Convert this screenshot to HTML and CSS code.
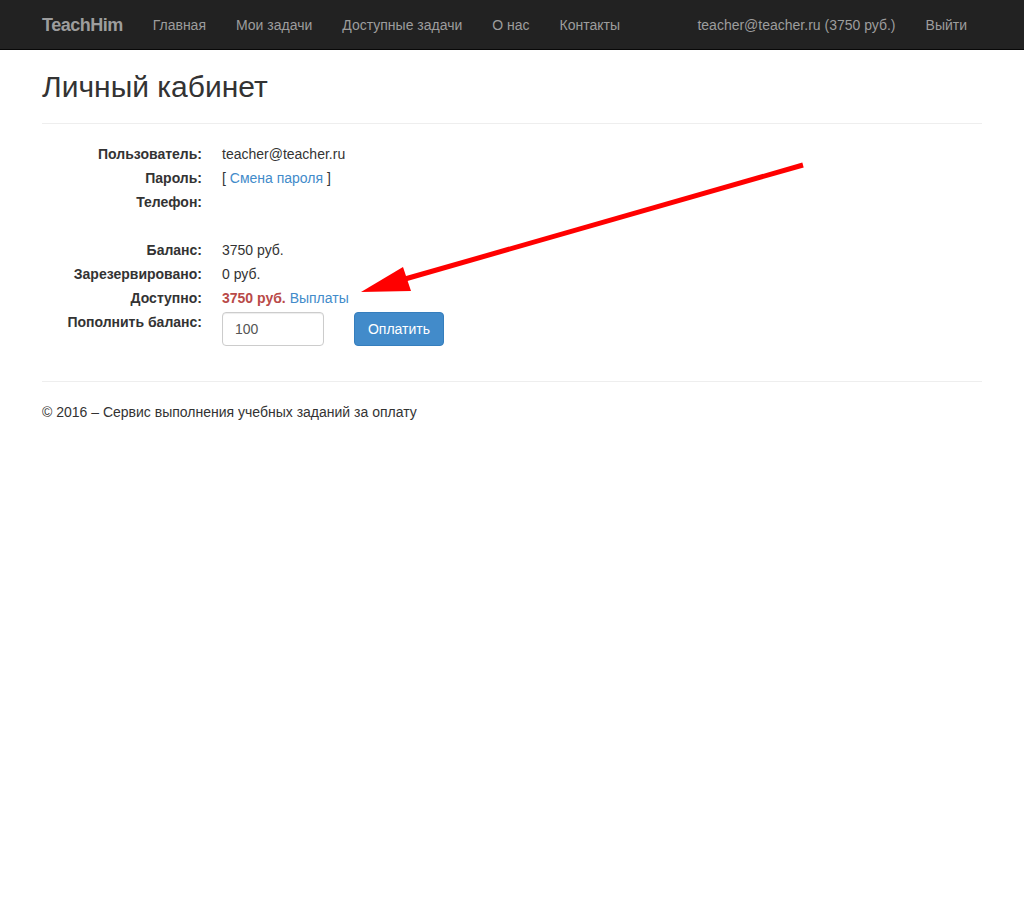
FILE: index.html
```html
<!DOCTYPE html>
<html lang="ru">
<head>
<meta charset="utf-8">
<title>Личный кабинет - TeachHim</title>
<link rel="stylesheet" href="styles.css">
</head>
<body>
<nav class="navbar">
  <div class="container nav-inner">
    <a class="brand" href="#">TeachHim</a>
    <ul class="nav">
      <li><a href="#">Главная</a></li>
      <li><a href="#">Мои задачи</a></li>
      <li><a href="#">Доступные задачи</a></li>
      <li><a href="#">О нас</a></li>
      <li><a href="#">Контакты</a></li>
    </ul>
    <ul class="nav nav-right">
      <li><a href="#">teacher@teacher.ru (3750 руб.)</a></li>
      <li><a href="#">Выйти</a></li>
    </ul>
  </div>
</nav>
<div class="container body-content">
  <h2 class="title">Личный кабинет</h2>
  <hr class="rule">
  <dl class="info">
    <dt>Пользователь:</dt><dd>teacher@teacher.ru</dd>
    <dt>Пароль:</dt><dd>[ <a href="#">Смена пароля</a> ]</dd>
    <dt>Телефон:</dt><dd></dd>
    <dt></dt><dd></dd>
    <dt>Баланс:</dt><dd>3750 руб.</dd>
    <dt>Зарезервировано:</dt><dd>0 руб.</dd>
    <dt>Доступно:</dt><dd><strong class="danger">3750 руб.</strong> <a href="#">Выплаты</a></dd>
    <dt>Пополнить баланс:</dt>
    <dd class="pay">
      <input class="amount" type="text" value="100">
      <button class="btn-primary" type="button">Оплатить</button>
    </dd>
  </dl>
  <hr class="rule footer-rule">
  <footer class="footer">
    <p>© 2016 – Сервис выполнения учебных заданий за оплату</p>
  </footer>
</div>
<svg class="arrow" width="1024" height="897" viewBox="0 0 1024 897" aria-hidden="true">
  <line x1="803" y1="165" x2="405" y2="279" stroke="#ff0000" stroke-width="5"/>
  <polygon points="361,292 403,267 411,291" fill="#ff0000"/>
</svg>
</body>
</html>
```

FILE: styles.css
```css
* { box-sizing: border-box; }
html, body { margin: 0; padding: 0; }
body {
  font-family: "Liberation Sans", Arial, sans-serif;
  font-size: 14px;
  line-height: 20px;
  color: #333;
  background: #fff;
}
a { color: #428bca; text-decoration: none; }

.container {
  width: 970px;
  margin: 0 auto;
  padding: 0 15px;
}

.navbar {
  height: 50px;
  background: #222;
  border-bottom: 1px solid #080808;
}
.nav-inner {
  display: flex;
  align-items: flex-start;
  height: 49px;
}
.brand {
  color: #9d9d9d;
  font-size: 18px;
  font-weight: bold;
  line-height: 20px;
  letter-spacing: -0.5px;
  padding: 15px 15px 14px 0;
}
.nav {
  list-style: none;
  margin: 0;
  padding: 0;
  display: flex;
}
.nav li a {
  display: block;
  color: #9d9d9d;
  padding: 15px 15px 14px;
  line-height: 20px;
}
.nav-right { margin-left: auto; }

.title {
  font-size: 30px;
  font-weight: 500;
  line-height: 33px;
  margin: 20px 0 0;
  color: #333;
}
.rule {
  border: 0;
  border-top: 1px solid #eee;
  margin: 20px 0;
  height: 0;
}

.info {
  display: grid;
  grid-template-columns: 160px 1fr;
  column-gap: 20px;
  row-gap: 4px;
  margin: 0;
}
.info dt {
  font-weight: bold;
  text-align: right;
  min-height: 20px;
}
.info dd { margin: 0; min-height: 20px; }
.danger { color: #b94a48; }

.pay {
  display: flex;
  gap: 30px;
  align-items: flex-start;
}
.amount {
  width: 102px;
  height: 34px;
  padding: 6px 12px;
  font-family: inherit;
  font-size: 14px;
  color: #555;
  border: 1px solid #ccc;
  border-radius: 4px;
  box-shadow: inset 0 1px 1px rgba(0,0,0,.075);
}
.btn-primary {
  width: 90px;
  height: 34px;
  padding: 6px 12px;
  font-family: inherit;
  font-size: 14px;
  color: #fff;
  background: #428bca;
  border: 1px solid #357ebd;
  border-radius: 4px;
}

.footer-rule { margin-top: 35px; }
.footer p { margin: 0; }

.arrow {
  position: absolute;
  left: 0;
  top: 0;
  pointer-events: none;
}
```
